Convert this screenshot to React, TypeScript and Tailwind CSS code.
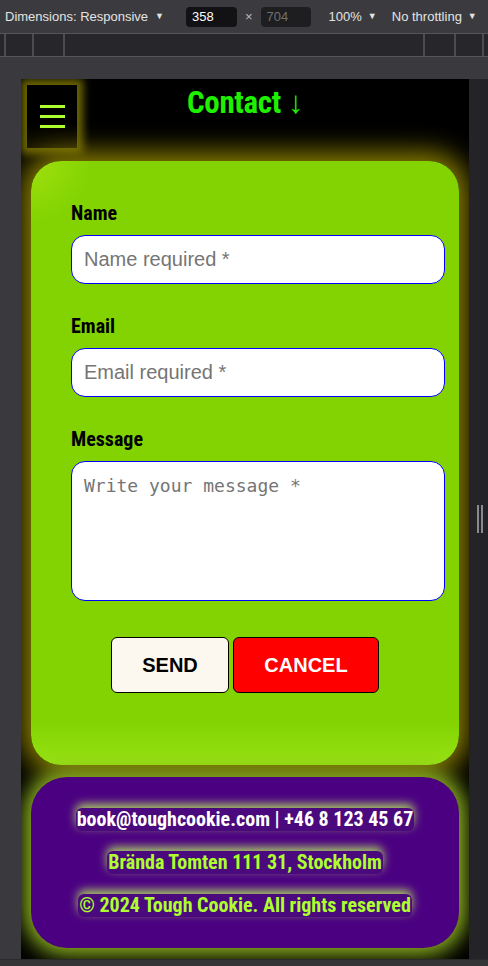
import { FC } from 'react';

const cond = "font-['Roboto_Condensed','Roboto',sans-serif]";

const Toolbar: FC = () => (
  <div className="h-[34px] shrink-0 bg-[#3b3b3f] border-b border-[#56565a] flex items-center whitespace-nowrap text-[13px] text-[#e3e3e3] font-['Liberation_Sans',Arial,sans-serif]">
    <span className="ml-[5px] shrink-0">Dimensions: Responsive</span>
    <span className="ml-[7px] text-[9px] shrink-0">▼</span>
    <div className="ml-[22px] shrink-0 w-[51px] h-[20px] rounded-[4px] bg-[#121214] flex items-center pl-[6px] text-white">358</div>
    <span className="mx-[8px] shrink-0 text-[#bbbbbb]">×</span>
    <div className="shrink-0 w-[50px] h-[20px] rounded-[4px] bg-[#1e1e20] flex items-center pl-[6px] text-[#707070]">704</div>
    <span className="ml-[18px] shrink-0">100%</span>
    <span className="ml-[6px] text-[9px] shrink-0">▼</span>
    <span className="ml-[15px] shrink-0">No throttling</span>
    <span className="ml-[6px] text-[9px] shrink-0">▼</span>
  </div>
);

const Ruler: FC = () => (
  <div className="h-[23px] shrink-0 bg-[#27272b] border-b border-[#56565a] flex">
    <div className="w-[6px] border-r-2 border-[#4c4c50]" />
    <div className="w-[28px] border-r-2 border-[#4c4c50]" />
    <div className="w-[31px] border-r-2 border-[#4c4c50]" />
    <div className="flex-1 border-r-2 border-[#4c4c50]" />
    <div className="w-[31px] border-r-2 border-[#4c4c50]" />
    <div className="w-[28px] border-r-2 border-[#4c4c50]" />
    <div className="w-[4px]" />
  </div>
);

const labelCls = `block text-[20px] leading-[22px] font-bold text-black ${cond}`;

const Field: FC<{ label: string; placeholder: string; first?: boolean }> = ({ label, placeholder, first }) => (
  <div className={first ? '' : 'mt-[31px]'}>
    <label className={labelCls}>{label}</label>
    <input
      placeholder={placeholder}
      className="mt-[11px] block w-full h-[49px] rounded-[14px] border border-[#0000ff] bg-white px-[12px] text-[20px] font-['Liberation_Sans',Arial,sans-serif] placeholder:text-[#757575] outline-none"
    />
  </div>
);

const FooterLine: FC<{ text: string; white?: boolean }> = ({ text, white }) => (
  <span
    className={`inline-block px-[1px] h-[23px] leading-[23px] rounded-[6px] bg-[#4a0a7e] shadow-[0_-4px_10px_rgba(190,255,90,0.8)] text-[20px] font-bold ${cond} ${white ? 'text-white' : 'text-[#adff2f]'}`}
  >
    {text}
  </span>
);

const Page: FC = () => (
  <div className="w-[448px] h-[880px] bg-black overflow-hidden flex flex-col">
    <header className="h-[82px] shrink-0 grid grid-cols-[62px_1fr_62px]">
      <div className="pt-[6px] pl-[6px]">
        <button className="w-[50px] h-[63px] bg-[linear-gradient(180deg,#000_60%,#141200)] shadow-[0_0_8px_6px_#6c6600] flex flex-col items-center justify-center gap-[7px]">
          <span className="block w-[25px] h-[3px] bg-[#adff2f]" />
          <span className="block w-[25px] h-[3px] bg-[#adff2f]" />
          <span className="block w-[25px] h-[3px] bg-[#adff2f]" />
        </button>
      </div>
      <h1 className={`text-center pt-[6px] text-[31px] leading-[36px] font-bold text-[#1ef000] ${cond} tracking-[-0.3px]`}>
        Contact ↓
      </h1>
      <div />
    </header>

    <main className="mx-[10px] h-[604px] shrink-0 rounded-[30px] bg-[radial-gradient(circle_at_0%_0%,#a0e00e,transparent_60px),linear-gradient(180deg,#83d302_93%,#97e214)] shadow-[0_0_26px_9px_#8a7e00] pt-[41px] pl-[40px] pr-[14px]">
      <Field first label="Name" placeholder="Name required *" />
      <Field label="Email" placeholder="Email required *" />
      <div className="mt-[31px]">
        <label className={labelCls}>Message</label>
        <textarea
          placeholder="Write your message *"
          className="mt-[11px] block w-full h-[140px] rounded-[14px] border border-[#0000ff] bg-white px-[12px] py-[12px] text-[18px] leading-[24px] font-['DejaVu_Sans_Mono',monospace] placeholder:text-[#757575] outline-none resize-none"
        />
      </div>
      <div className="mt-[36px] flex justify-center gap-[4px] pr-[26px] font-['Liberation_Sans',Arial,sans-serif]">
        <button className="w-[118px] h-[56px] rounded-[6px] border border-black bg-[#fdf8ef] text-[20px] font-bold text-black">SEND</button>
        <button className="w-[146px] h-[56px] rounded-[6px] border border-black bg-[#ff0000] text-[20px] font-bold text-white">CANCEL</button>
      </div>
    </main>

    <footer className="mx-[10px] mt-[12px] h-[171px] shrink-0 rounded-[36px] bg-[#4b0082] shadow-[0_0_20px_7px_#8fb520] flex flex-col items-center pt-[31px] gap-[20px]">
      <FooterLine white text="book@toughcookie.com | +46 8 123 45 67" />
      <FooterLine text="Brända Tomten 111 31, Stockholm" />
      <FooterLine text="© 2024 Tough Cookie. All rights reserved" />
    </footer>
  </div>
);

export default function App() {
  return (
    <div className="w-[488px] h-[966px] bg-[#3a3a3e] flex flex-col overflow-hidden">
      <Toolbar />
      <Ruler />
      <div className="h-[22px] shrink-0" />
      <div className="flex shrink-0">
        <div className="w-[21px]" />
        <Page />
        <div className="flex-1 bg-[#242428] flex items-start justify-center pt-[426px]">
          <div className="flex gap-[2px] ml-[2px]">
            <span className="block w-[2px] h-[28px] bg-[#8a8a8e]" />
            <span className="block w-[2px] h-[28px] bg-[#8a8a8e]" />
          </div>
        </div>
      </div>
      <div className="flex-1 border-t border-[#2a2a2c] bg-[#353538]" />
    </div>
  );
}
